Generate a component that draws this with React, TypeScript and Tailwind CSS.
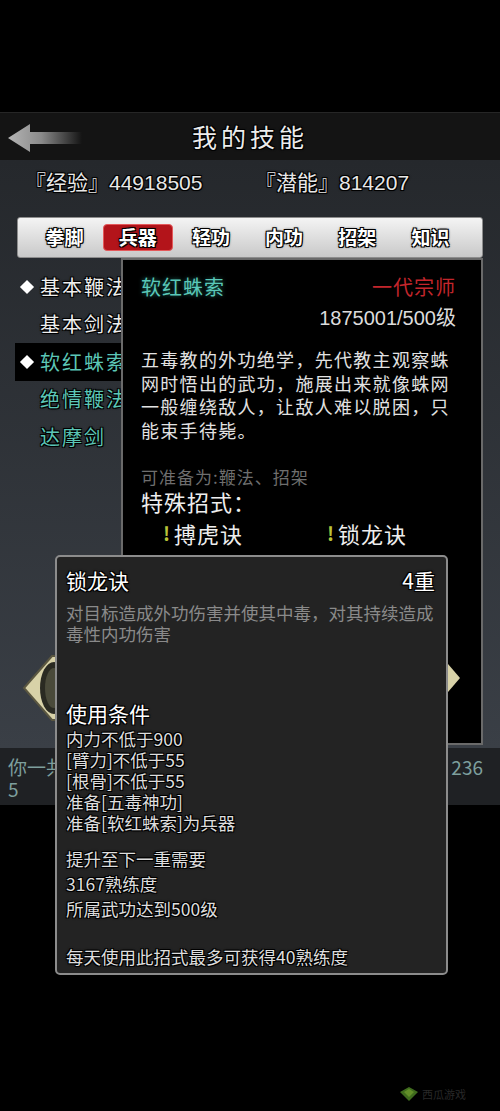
import React from 'react';

const outline =
  '[text-shadow:1px_1px_0_#000,-1px_-1px_0_#000,1px_-1px_0_#000,-1px_1px_0_#000,0_0_3px_#000]';

const tabs = ['拳脚', '兵器', '轻功', '内功', '招架', '知识'];

const skills = [
  { name: '基本鞭法', mark: true, teal: false, active: false },
  { name: '基本剑法', mark: false, teal: false, active: false },
  { name: '软红蛛索', mark: true, teal: true, active: true },
  { name: '绝情鞭法', mark: false, teal: true, active: false },
  { name: '达摩剑', mark: false, teal: true, active: false },
];

const descLines = [
  '五毒教的外功绝学，先代教主观察蛛',
  '网时悟出的武功，施展出来就像蛛网',
  '一般缠绕敌人，让敌人难以脱困，只',
  '能束手待毙。',
];

const conditions = ['内力不低于900', '[臂力]不低于55', '[根骨]不低于55', '准备[五毒神功]', '准备[软红蛛索]为兵器'];

const upgrade = ['提升至下一重需要', '3167熟练度', '所属武功达到500级'];

function BackArrow() {
  return (
    <svg width="76" height="32" viewBox="0 0 76 32">
      <defs>
        <linearGradient id="arrowFade" x1="0" x2="1" y1="0" y2="0">
          <stop offset="0" stopColor="#b5b5b5" />
          <stop offset="0.45" stopColor="#8a8a8a" />
          <stop offset="1" stopColor="#8a8a8a" stopOpacity="0" />
        </linearGradient>
      </defs>
      <polygon points="2,16 24,2 24,10 76,10 76,22 24,22 24,30" fill="url(#arrowFade)" />
    </svg>
  );
}

function SideOrnament() {
  return (
    <svg width="44" height="68" viewBox="0 0 44 68">
      <polygon points="2,34 30,2 42,2 42,66 30,66" fill="#d8d2a8" stroke="#5a5640" strokeWidth="2" />
      <ellipse cx="32" cy="34" rx="14" ry="26" fill="#2a2a22" />
      <ellipse cx="32" cy="34" rx="9" ry="20" fill="#4a4a3a" />
    </svg>
  );
}

export default function App() {
  return (
    <div className="relative w-[500px] h-[1111px] overflow-hidden bg-black font-['Noto_Sans_CJK_SC',sans-serif] text-[#e6e6e6]">
      <div className="h-[112px]" />

      {/* title bar */}
      <header className="grid h-[48px] grid-cols-[90px_1fr_90px] items-center border-t border-[#262626] bg-[#141414]">
        <div className="pl-[6px] pt-[2px]">
          <BackArrow />
        </div>
        <h1 className={`text-center text-[25px] tracking-[4px] text-[#ececec] ${outline}`}>我的技能</h1>
        <div />
      </header>

      {/* main panel */}
      <section className="flex h-[588px] flex-col bg-gradient-to-b from-[#25282c] to-[#3a3f46]">
        <div className={`flex h-[44px] items-center pl-[25px] pt-[2px] font-['Liberation_Sans','Noto_Sans_CJK_SC',sans-serif] text-[21px] text-[#e8e8e8] ${outline}`}>
          <span className="w-[230px]">『经验』44918505</span>
          <span>『潜能』814207</span>
        </div>

        <nav className="mx-[17px] mt-[13px] grid h-[41px] grid-cols-6 items-center rounded-[3px] border border-[#8d8d8d] bg-gradient-to-b from-[#f4f4f4] to-[#c9c9c9] pl-[10px] pr-[15px]">
          {tabs.map((t) => (
            <div key={t} className="flex justify-center">
              <span
                className={`flex h-[27px] w-[70px] items-center justify-center rounded-[4px] text-[19px] font-bold text-white ${outline} ${
                  t === '兵器' ? 'border border-[#e4585a] bg-[#b3141a]' : ''
                }`}
              >
                {t}
              </span>
            </div>
          ))}
        </nav>

        <div className="flex flex-1 pb-[3px] pl-[15px] pr-[17px]">
          {/* skill list */}
          <div className="w-[106px] shrink-0 overflow-hidden pt-[10px]">
            {skills.map((s) => (
              <div key={s.name} className={`flex h-[37.5px] items-center whitespace-nowrap ${s.active ? 'bg-black' : ''}`}>
                <span className="flex w-[25px] shrink-0 justify-center pr-[2px]">
                  {s.mark && <span className="h-[10px] w-[10px] rotate-45 bg-white" />}
                </span>
                <span className={`shrink-0 text-[20px] tracking-[2px] ${outline} ${s.teal ? 'text-[#5cc6b6]' : 'text-[#eeeeee]'}`}>
                  {s.name}
                </span>
              </div>
            ))}
            <div className="ml-[7px] mt-[198px]">
              <SideOrnament />
            </div>
          </div>

          {/* skill detail */}
          <div className="relative flex-1 border-2 border-[#6a6a6a] bg-black pl-[18px] pr-[25px] pt-[13px]">
            <div className="flex h-[28px] items-center justify-between">
              <span className="text-[20px] tracking-[1px] text-[#5ac8b8] [text-shadow:0_0_4px_#1f6a60]">软红蛛索</span>
              <span className="text-[20px] tracking-[1px] text-[#c3262c]">一代宗师</span>
            </div>
            <div className="mt-[4px] h-[26px] text-right font-['Liberation_Sans','Noto_Sans_CJK_SC',sans-serif] text-[20px] leading-[26px] text-[#dcdcdc]">
              1875001/500级
            </div>
            <div className="mt-[17px] text-[18px] leading-[23.5px] tracking-[1.3px] text-[#e2e2e2]">
              {descLines.map((l) => (
                <div key={l} className="whitespace-nowrap">{l}</div>
              ))}
            </div>
            <div className="mt-[23px] text-[17px] leading-[24px] tracking-[1px] text-[#6e6e6e]">可准备为:鞭法、招架</div>
            <div className="text-[22px] leading-[24px] tracking-[1px] text-[#eeeeee]">特殊招式：</div>
            <div className="mt-[6px] flex h-[28px] items-center pl-[22px]">
              <div className="flex w-[164px] items-center gap-[4px]">
                <span className="text-[19px] font-bold text-[#b9c43a]">!</span>
                <span className="text-[22px] tracking-[1px] text-[#eeeeee]">搏虎诀</span>
              </div>
              <div className="flex items-center gap-[4px]">
                <span className="text-[19px] font-bold text-[#b9c43a]">!</span>
                <span className="text-[22px] tracking-[1px] text-[#eeeeee]">锁龙诀</span>
              </div>
            </div>
            <span className="absolute left-[325px] top-[404px] h-0 w-0 border-y-[14px] border-l-[12px] border-y-transparent border-l-[#d8d2a8]" />
          </div>
        </div>
      </section>

      {/* summary line, mostly covered by the tooltip */}
      <div className="h-[57px] bg-[#1f2124] px-[8px] pt-[8px] text-[19px] leading-[22px] text-[#7d9f9d]">
        <div className="flex justify-between">
          <span>你一共</span>
          <span className="pr-[9px]">236</span>
        </div>
        <div>5</div>
      </div>

      {/* watermark */}
      <div className="absolute left-[400px] top-[1086px] flex items-center gap-[4px] opacity-70">
        <svg width="18" height="14" viewBox="0 0 18 14">
          <polygon points="0,5 9,0 18,5 9,14" fill="#5a9a2a" />
          <polygon points="4,5 9,2 14,5 9,10" fill="#8ccc3a" />
        </svg>
        <span className="text-[11px] text-[#3a3a3a]">西瓜游戏</span>
      </div>

      {/* move tooltip */}
      <div className={`absolute left-[55px] top-[555px] h-[420px] w-[393px] rounded-[5px] border-2 border-[#8c8c8c] bg-[#232323] pl-[9px] pr-[11px] pt-[9px] ${outline}`}>
        <div className="flex h-[30px] items-center justify-between text-[21px] text-white">
          <span>锁龙诀</span>
          <span>4重</span>
        </div>
        <div className="mt-[6px] text-[17.5px] leading-[21px] text-[#8a8a8a] [text-shadow:none]">
          <div className="whitespace-nowrap">对目标造成外功伤害并使其中毒，对其持续造成</div>
          <div>毒性内功伤害</div>
        </div>
        <div className="mt-[55px] h-[28px] text-[21px] leading-[28px] text-white">使用条件</div>
        <div className="mt-[1px] text-[17.5px] leading-[21px] text-[#dedede]">
          {conditions.map((c) => (
            <div key={c}>{c}</div>
          ))}
        </div>
        <div className="mt-[13px] text-[17.5px] leading-[25px] text-[#dedede]">
          {upgrade.map((c) => (
            <div key={c}>{c}</div>
          ))}
        </div>
        <div className="mt-[23px] text-[17.5px] leading-[25px] text-[#dedede]">每天使用此招式最多可获得40熟练度</div>
      </div>
    </div>
  );
}
